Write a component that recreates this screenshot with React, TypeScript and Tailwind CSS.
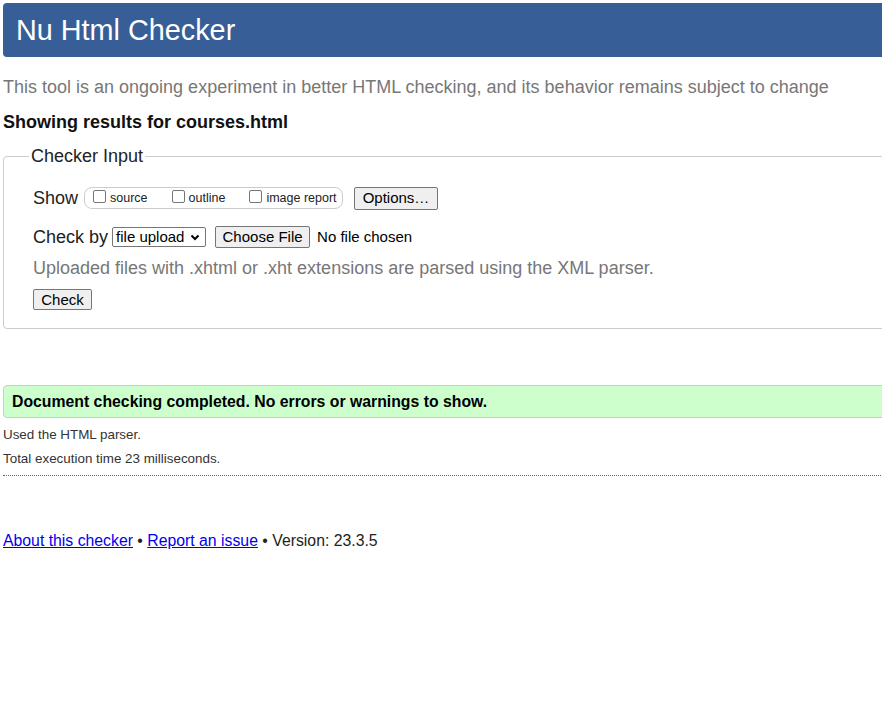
import React from 'react';

const Checkbox: React.FC<{ label: string }> = ({ label }) => (
  <span className="flex items-center">
    <span className="w-[13px] h-[13px] mb-[4px] mr-[4px] border border-[#767676] rounded-[2px] bg-white" />
    <span className="text-[12.5px] leading-[16px] text-[#222]">{label}</span>
  </span>
);

const Button: React.FC<{ children: React.ReactNode; className?: string }> = ({ children, className = '' }) => (
  <span
    className={`flex items-center justify-center border border-[#767676] rounded-[2px] bg-[#efefef] text-[15px] leading-[18px] text-black ${className}`}
  >
    {children}
  </span>
);

const App: React.FC = () => {
  return (
    <div className="w-[882px] h-[718px] overflow-hidden bg-white font-['Liberation_Sans',Arial,sans-serif] text-[#222]">
      <div className="w-[1100px] p-[3px]">
        {/* Header */}
        <header className="h-[54px] flex items-center px-[13px] bg-[#375e96] rounded-l-[4px]">
          <h1 className="text-[28.8px] leading-[34px] text-white">Nu Html Checker</h1>
        </header>

        <p className="mt-[19px] text-[18px] leading-[22px] text-[#777]">
          This tool is an ongoing experiment in better HTML checking, and its behavior remains subject to change
        </p>
        <p className="mt-[13px] text-[18px] leading-[22px] font-bold text-[#111]">
          Showing results for courses.html
        </p>

        {/* Checker input */}
        <fieldset className="mt-[13px] px-[25px] pb-[18px] border border-[#ccc] rounded-[4px]">
          <legend className="px-[2px] text-[18px] leading-[20px] text-[#222]">Checker Input</legend>

          <div className="ml-[4px] mt-[20px] h-[24px] flex items-center">
            <span className="text-[18px] leading-[22px]">Show</span>
            <div className="ml-[6px] h-[22px] w-[259px] flex items-center pl-[8px] border border-[#ccc] rounded-[8px] gap-[24px]">
              <Checkbox label="source" />
              <Checkbox label="outline" />
              <Checkbox label="image report" />
            </div>
            <Button className="ml-[11px] w-[84px] h-[23px]">Options…</Button>
          </div>

          <div className="ml-[4px] mt-[16px] h-[22px] flex items-center">
            <span className="text-[18px] leading-[22px]">Check by</span>
            <span className="ml-[4px] w-[94px] h-[20px] flex items-center justify-between pl-[3px] pr-[5px] border border-[#767676] rounded-[2px] text-[15px] leading-[18px] text-black">
              file upload
              <svg width="10" height="7" viewBox="0 0 10 7" aria-hidden="true">
                <polyline points="1.5,1.5 5,5 8.5,1.5" fill="none" stroke="#000" strokeWidth="2" />
              </svg>
            </span>
            <Button className="ml-[9px] w-[95px] h-[22px]">Choose File</Button>
            <span className="ml-[7px] text-[15px] leading-[18px] text-black">No file chosen</span>
          </div>

          <p className="ml-[4px] mt-[9px] text-[18px] leading-[22px] text-[#777]">
            Uploaded files with .xhtml or .xht extensions are parsed using the XML parser.
          </p>

          <div className="ml-[4px] mt-[10px] flex">
            <Button className="w-[59px] h-[21px]">Check</Button>
          </div>
        </fieldset>

        {/* Result */}
        <div className="mt-[56px] h-[33px] flex items-center px-[8px] bg-[#ccffcc] border border-[#ccc] rounded-[4px]">
          <span className="text-[15.8px] leading-[20px] font-bold text-black">
            Document checking completed. No errors or warnings to show.
          </span>
        </div>
        <p className="mt-[9px] text-[13.4px] leading-[16px] text-[#333]">Used the HTML parser.</p>
        <p className="mt-[8px] text-[13.4px] leading-[16px] text-[#333]">Total execution time 23 milliseconds.</p>
        <div className="mt-[8px] border-t border-dotted border-[#666]" />

        {/* Footer */}
        <p className="mt-[55px] text-[15.8px] leading-[20px] text-[#222]">
          <a href="#" className="text-[#0000ee] underline">About this checker</a>
          {' • '}
          <a href="#" className="text-[#0000ee] underline">Report an issue</a>
          {' • Version: 23.3.5'}
        </p>
      </div>
    </div>
  );
};

export default App;
